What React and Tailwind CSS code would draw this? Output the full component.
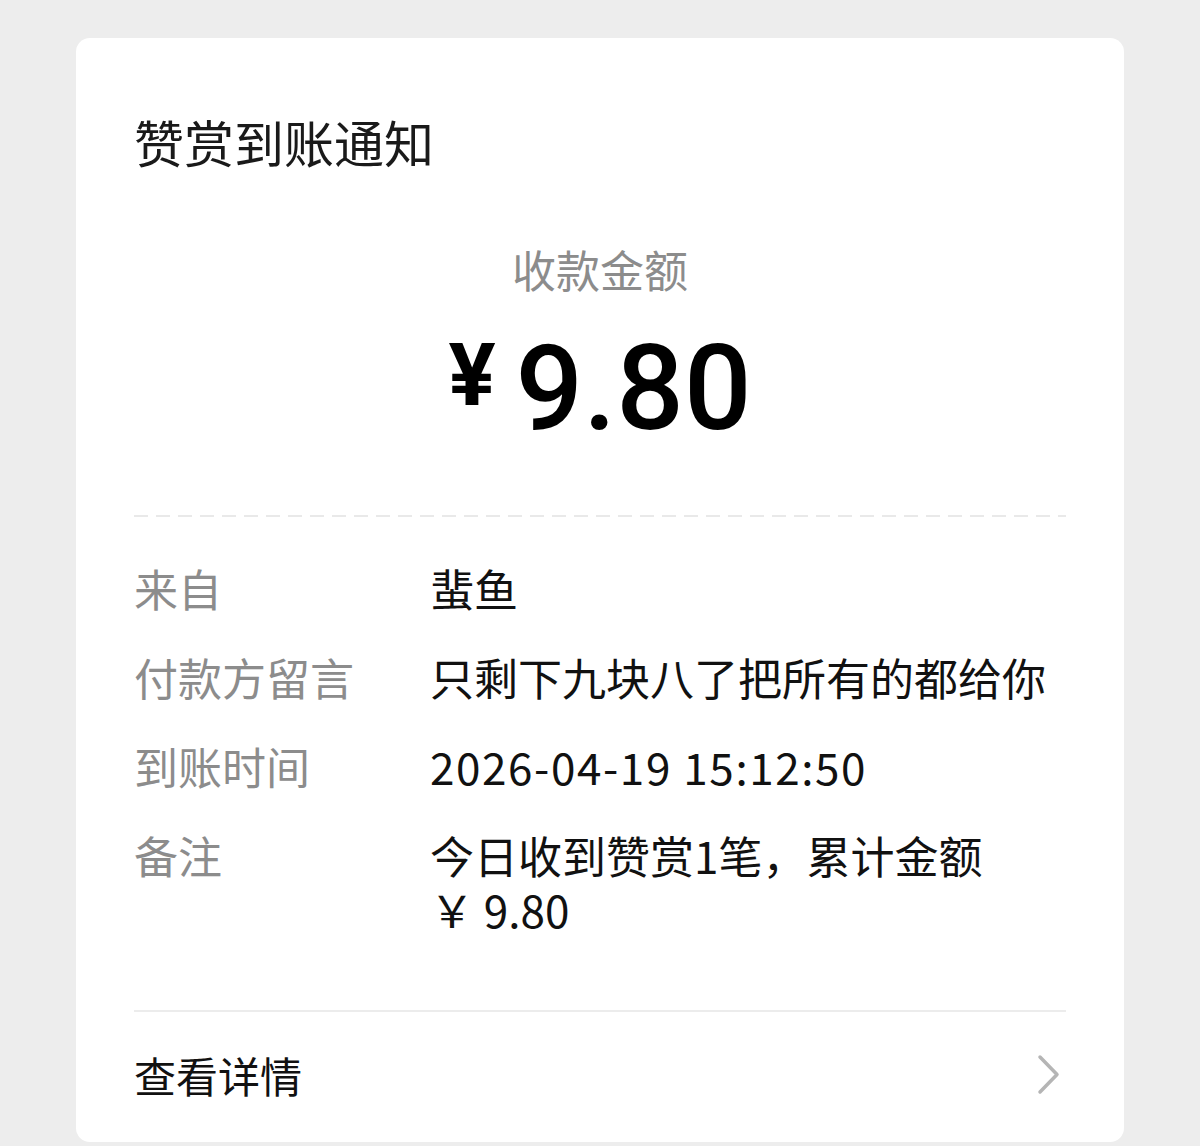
const rows = [
  { label: '来自', value: ['蜚鱼'] },
  { label: '付款方留言', value: ['只剩下九块八了把所有的都给你'] },
  { label: '到账时间', value: ['2026-04-19 15:12:50'], track: true },
  { label: '备注', value: ['今日收到赞赏1笔，累计金额', '￥ 9.80'] },
];

const cjk = "font-['Noto_Sans_CJK_SC','Noto_Sans',sans-serif]";

const App = () => {
  return (
    <div className={`min-h-[1146px] bg-[#ededed] px-[76px] pt-[38px] ${cjk}`}>
      <div className="rounded-[14px] bg-white px-[58px] pt-[73px] pb-[40px]">
        <h1 className="text-[50px] leading-[60px] font-normal text-[#1a1a1a]">
          赞赏到账通知
        </h1>

        <div className="mt-[68px] text-center text-[44px] leading-[60px] text-[#8c8c8c]">
          收款金额
        </div>

        <div className="mt-[30px] flex justify-center items-start font-['Roboto',sans-serif] text-black">
          <span className="mt-[2px] mr-[20px] text-[88px] leading-[88px] font-bold">¥</span>
          <span className="text-[119px] leading-[120px] font-medium">9.80</span>
        </div>

        <div className="mt-[66px] h-[2px] bg-[linear-gradient(to_right,#e9e9e9_62%,transparent_0)] bg-[length:22px_2px] bg-repeat-x" />

        <div className="mt-[44px] flex flex-col gap-[35px]">
          {rows.map((row) => (
            <div key={row.label} className="flex text-[44px] leading-[54px]">
              <div className="w-[296px] shrink-0 text-[#8c8c8c]">{row.label}</div>
              <p className={row.track ? 'text-[#111] tracking-[1.6px]' : 'text-[#111]'}>
                {row.value.map((line, i) => (
                  <span key={line}>
                    {i > 0 && <br />}
                    {line}
                  </span>
                ))}
              </p>
            </div>
          ))}
        </div>

        <div className="mt-[74px] h-[2px] bg-[#ececec]" />

        <div className="mt-[36px] flex items-center justify-between">
          <span className="text-[42px] leading-[54px] text-[#111]">查看详情</span>
          <svg width="26" height="42" viewBox="0 0 26 42" className="mr-[4px]">
            <path d="M4 3 L21 20.5 L4 38" fill="none" stroke="#b5b5b5" strokeWidth="3.5" strokeLinecap="round" strokeLinejoin="round" />
          </svg>
        </div>
      </div>
    </div>
  );
};

export default App;
